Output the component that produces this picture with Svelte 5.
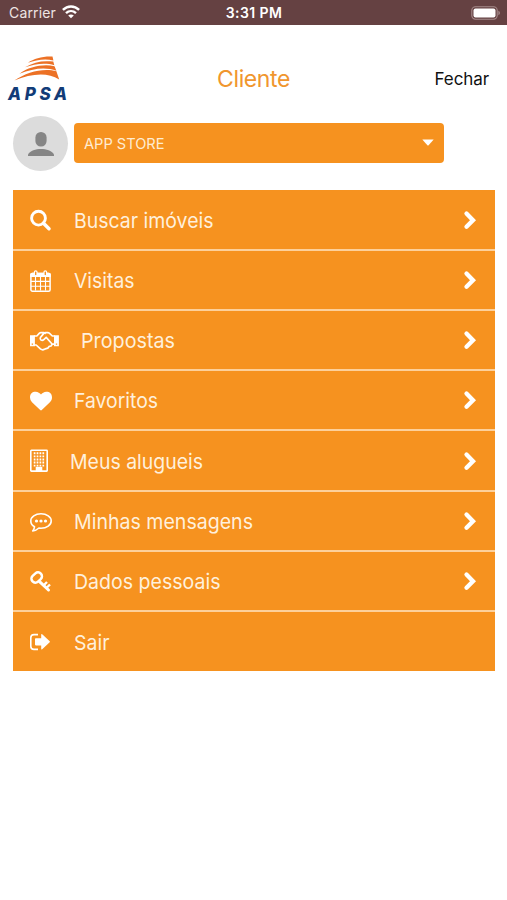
<script>
  const items = [
    { icon: 'search', label: 'Buscar imóveis', start: 43.6, width: 139.5 },
    { icon: 'calendar', label: 'Visitas', start: 43.5, width: 60.5 },
    { icon: 'handshake', label: 'Propostas', start: 50.5, width: 94 },
    { icon: 'heart', label: 'Favoritos', start: 44, width: 84 },
    { icon: 'building', label: 'Meus alugueis', start: 40, width: 133 },
    { icon: 'message', label: 'Minhas mensagens', start: 44, width: 179 },
    { icon: 'key', label: 'Dados pessoais', start: 44, width: 146.5 },
    { icon: 'exit', label: 'Sair', start: 43.5, width: 35.5, last: true }
  ];
</script>

<div class="screen">
  <header class="status">
    <div class="carrier">
      <span>Carrier</span>
      <svg width="18" height="14" viewBox="0 0 18 14">
        <g fill="none" stroke="#fff" stroke-width="2.4">
          <path d="M.9 4.9C5.6.3 12.4.3 17.1 4.9" />
          <path d="M4 8.2c2.9-2.8 7.1-2.8 10 0" />
        </g>
        <path fill="#fff" d="M6.2 10.5c1.6-1.4 4-1.4 5.6 0L9 13.3z" />
      </svg>
    </div>
    <span class="time">3:31 PM</span>
    <svg class="battery" width="30" height="14" viewBox="0 0 30 14">
      <rect x=".8" y=".8" width="25.4" height="12.4" rx="3.6" fill="none" stroke="#a58a8a" stroke-width="1.1" />
      <rect x="2.5" y="2.5" width="22" height="9" rx="2" fill="#fff" />
      <path d="M27.4 4.8c2 .7 2 3.7 0 4.4z" fill="#a58a8a" />
    </svg>
  </header>

  <div class="top">
    <div class="logo">
      <svg width="46" height="26" viewBox="0 0 46 26" fill="#ec7125">
        <path d="M14 6.800C20 2.500 29 .1 38.500.6l.9 3.900C31 2.500 22 4 14 6.800z" />
        <path d="M11 11.300C20 5.900 29 4.200 39.300 5.600l1 3.600C31.500 6.200 20 7.900 11 11.300z" />
        <path d="M5.500 17.800C15 10.700 29 7.800 40.500 10.200l1.900 4.600C32 10.600 19 12.200 5.500 17.800z" />
        <path d="M.3 24.500C13 15.600 30 11.600 42.400 15.200l2.800 8.300C33 15.800 17 17.900.3 24.500z" />
      </svg>
      <span>APSA</span>
    </div>
    <h1>Cliente</h1>
    <span class="close">Fechar</span>
  </div>

  <div class="account">
    <div class="avatar">
      <svg width="26" height="26" viewBox="0 0 26 26" fill="#858585">
        <rect x="7.4" y="1" width="11.2" height="14.6" rx="5.5" />
        <path d="M0 25v-1.6c2.3-3.7 7.7-5.3 13-5.3s10.700 1.600 13 5.300V25z" />
      </svg>
    </div>
    <div class="select">
      <svg class="name" width="90" height="20">
        <text x="0" y="16" textLength="80.500" lengthAdjust="spacingAndGlyphs">APP STORE</text>
      </svg>
      <svg width="12" height="7" viewBox="0 0 12 7"><path d="M.3.5h11.400L6.600 6.200q-.6.6-1.200 0z" fill="#fff" /></svg>
    </div>
  </div>

  <nav>
    {#each items as item}
      <div class="row">
        <div class="icon" style="width: {item.start}px">
          <svg width="30" height="24" viewBox="0 0 30 24" fill="none" stroke="#fff">
            {#if item.icon === 'search'}
              <circle cx="8.500" cy="10.200" r="6.900" stroke-width="2.900" />
              <path d="M13.500 15.200l5.500 5.500" stroke-width="3.500" stroke-linecap="round" />
            {:else if item.icon === 'calendar'}
              <path d="M2 3.800h17q1.800 0 1.800 1.800V8H.2V5.600Q.2 3.800 2 3.800z" fill="#fff" stroke="none" />
              <rect x=".9" y="4.500" width="19.200" height="17.700" rx="1.500" stroke-width="1.500" />
              <path d="M5.500 8v13.500M10.500 8v13.500M15.500 8v13.500M1 12.400h19M1 17.200h19" stroke-width="1.100" />
              <rect x="4.400" y="1.800" width="2.600" height="5" rx="1.300" fill="#f6921f" stroke-width="1.200" />
              <rect x="14" y="1.800" width="2.600" height="5" rx="1.300" fill="#f6921f" stroke-width="1.200" />
            {:else if item.icon === 'handshake'}
              <path fill="#fff" stroke="none" fill-rule="evenodd" d="M0 6.200h4.900v11H0zM24 6.200h4.900v11H24zM1.700 14.400v1.400h1.400v-1.400zM25.800 14.400v1.400h1.400v-1.400z" />
              <g stroke-width="1.700" stroke-linejoin="round" stroke-linecap="round">
                <path d="M4.500 7h2.300l2.700-2.800q.6-.6 1.500-.6h2.600l1.500.7M4.500 16h1.700l4.200 3.900q2.200 1.600 4 .3l1.700-.6 1.700-.5 1.500-1.800 1.700-.3 1.200-1.800h2M24.300 7h-2l-3-2.800q-.6-.6-1.500-.6h-2.300q-.9 0-1.700.8L10.400 8.500q-.7 1.700.6 2.500 1.500.8 2.800-.4l2.400-2.200 5.200 5.800" />
              </g>
            {:else if item.icon === 'heart'}
              <path d="M11 21.500Q10.600 21.500 10.200 21.100L2 13.200Q0 11.200 0 8.500C0 4.800 2.200 2.800 5.700 2.800c2.200 0 4.200 1.600 5.300 2.700 1.100-1.100 3.100-2.700 5.300-2.700 3.500 0 5.700 2 5.700 5.700 0 1.900-.9 3.600-2.100 4.800l-8.100 7.800q-.4.400-.8.400z" fill="#fff" stroke="none" />
            {:else if item.icon === 'building'}
              <rect x=".8" y="1.300" width="16.400" height="20.800" rx=".6" stroke-width="1.600" />
              <path d="M4.600 3.300v15M7.500 3.300v15M10.400 3.300v15M13.300 3.300v15" stroke-width="1.700" stroke-dasharray="1.900 1.200" />
              <path d="M5.700 22v-4.200h6.600V22z" fill="#fff" stroke="none" />
            {:else if item.icon === 'message'}
              <path d="M11 3.800c5.700 0 10.200 3.200 10.200 7.200s-4.500 7.200-10.200 7.200l-2.100-.2c-1.700 1.600-3.600 2.700-6.200 3 .8-1 1.500-2.200 1.800-4.200C2.200 15.500.8 13.400.8 11 .8 7 5.300 3.800 11 3.800z" stroke-width="1.600" stroke-linejoin="round" />
              <g fill="#fff" stroke="none"><circle cx="6.500" cy="11" r="1.600" /><circle cx="11" cy="11" r="1.600" /><circle cx="15.500" cy="11" r="1.600" /></g>
            {:else if item.icon === 'key'}
              <rect x="1" y="3.600" width="11.400" height="7.800" rx="3.800" transform="rotate(-43 6.700 7.500)" stroke-width="2.500" />
              <path d="M9.300 11.300l9.200 8.700" stroke-width="3" stroke-linecap="round" />
              <path d="M13.500 15.500l3.500-3.500M16.400 18l3.600-3.500" stroke-width="2.400" />
            {:else}
              <path d="M8 4.600H4Q.8 4.600.8 7.800v8.400q0 3.200 3.200 3.200h4" stroke-width="1.600" />
              <path d="M5.800 8.300h5.400V4.800q0-1.300 1-.5l7.500 7q.5.500 0 1l-7.500 7q-1 .8-1-.5V15.400H5.800q-.8 0-.8-.8V9.100q0-.8.8-.8z" fill="#fff" stroke="none" />
            {/if}
          </svg>
        </div>
        <svg class="label" width="200" height="30">
          <text x="0" y="22.500" textLength={item.width} lengthAdjust="spacingAndGlyphs">{item.label}</text>
        </svg>
        {#if !item.last}
          <svg class="chevron" width="14" height="20" viewBox="0 0 14 20">
            <path d="M3.500 3.600l6.500 6.600-6.500 6.600" fill="none" stroke="#fff" stroke-width="4.300" stroke-linejoin="miter" stroke-linecap="round" />
          </svg>
        {/if}
      </div>
    {/each}
  </nav>
</div>

<style>
  :global(body) {
    margin: 0;
    background: #fff;
  }
  .screen {
    width: 507px;
    height: 900px;
    overflow: hidden;
    background: #fff;
    font-family: Inter, Roboto, sans-serif;
  }
  .status {
    height: 25px;
    background: #654142;
    color: #fff;
    display: grid;
    grid-template-columns: 1fr auto 1fr;
    align-items: center;
    padding: 0 6px 0 9px;
    box-sizing: border-box;
    font-size: 14px;
    line-height: 25px;
  }
  .carrier {
    display: flex;
    align-items: center;
    gap: 6px;
    color: #eee4e4;
    letter-spacing: 0.150px;
  }
  .carrier svg {
    margin-bottom: 1px;
  }
  .time {
    font-size: 14px;
    font-weight: 600;
    margin-right: 2px;
    letter-spacing: 0.400px;
  }
  .battery {
    justify-self: end;
    margin-top: 1px;
  }
  .top {
    height: 90px;
    display: grid;
    grid-template-columns: 1fr auto 1fr;
    align-items: center;
    padding: 0 18px;
    box-sizing: border-box;
  }
  .logo {
    width: 62px;
    margin-left: -10px;
    padding-top: 19px;
  }
  .logo svg {
    display: block;
    margin-left: 6px;
  }
  .logo span {
    display: block;
    color: #123c78;
    font: italic 800 17px/18px Inter, sans-serif;
    letter-spacing: 3.700px;
    margin-top: 3px;
  }
  h1 {
    margin: 18px 0 0;
    color: #f0962e;
    font-size: 23px;
    font-weight: 400;
    letter-spacing: -0.400px;
  }
  .close {
    justify-self: end;
    margin-top: 18px;
    font-size: 17px;
    letter-spacing: -0.100px;
    color: #111;
  }
  .account {
    display: flex;
    padding: 1px 0 0 13px;
    height: 75px;
    box-sizing: border-box;
    gap: 6px;
  }
  .avatar {
    width: 55px;
    height: 55px;
    border-radius: 50%;
    background: #dcdcdc;
    display: flex;
    align-items: center;
    justify-content: center;
  }
  .select {
    width: 370px;
    height: 40.500px;
    margin-top: 6.700px;
    border-radius: 4px;
    background: #f6921f;
    display: flex;
    align-items: center;
    justify-content: space-between;
    padding: 0 10px;
    box-sizing: border-box;
  }
  .name {
    font-size: 14.500px;
    fill: #ffecd2;
  }
  nav {
    width: 482px;
    margin-left: 13px;
    padding-top: 0.400px;
  }
  .row {
    height: 60.250px;
    box-sizing: border-box;
    display: flex;
    align-items: center;
    background: #f6921f;
    border-bottom: 2px solid #fdd09a;
    padding: 0 18px 0 17px;
  }
  .row:last-child {
    height: 59.200px;
    border-bottom: 0;
  }
  .icon {
    flex: none;
    height: 24px;
    padding-top: 1.500px;
  }
  .icon svg,
  .label {
    display: block;
    overflow: visible;
  }
  .label {
    flex: none;
    font-size: 20.500px;
    fill: #fff0dc;
  }
  .chevron {
    margin-left: auto;
  }
</style>
